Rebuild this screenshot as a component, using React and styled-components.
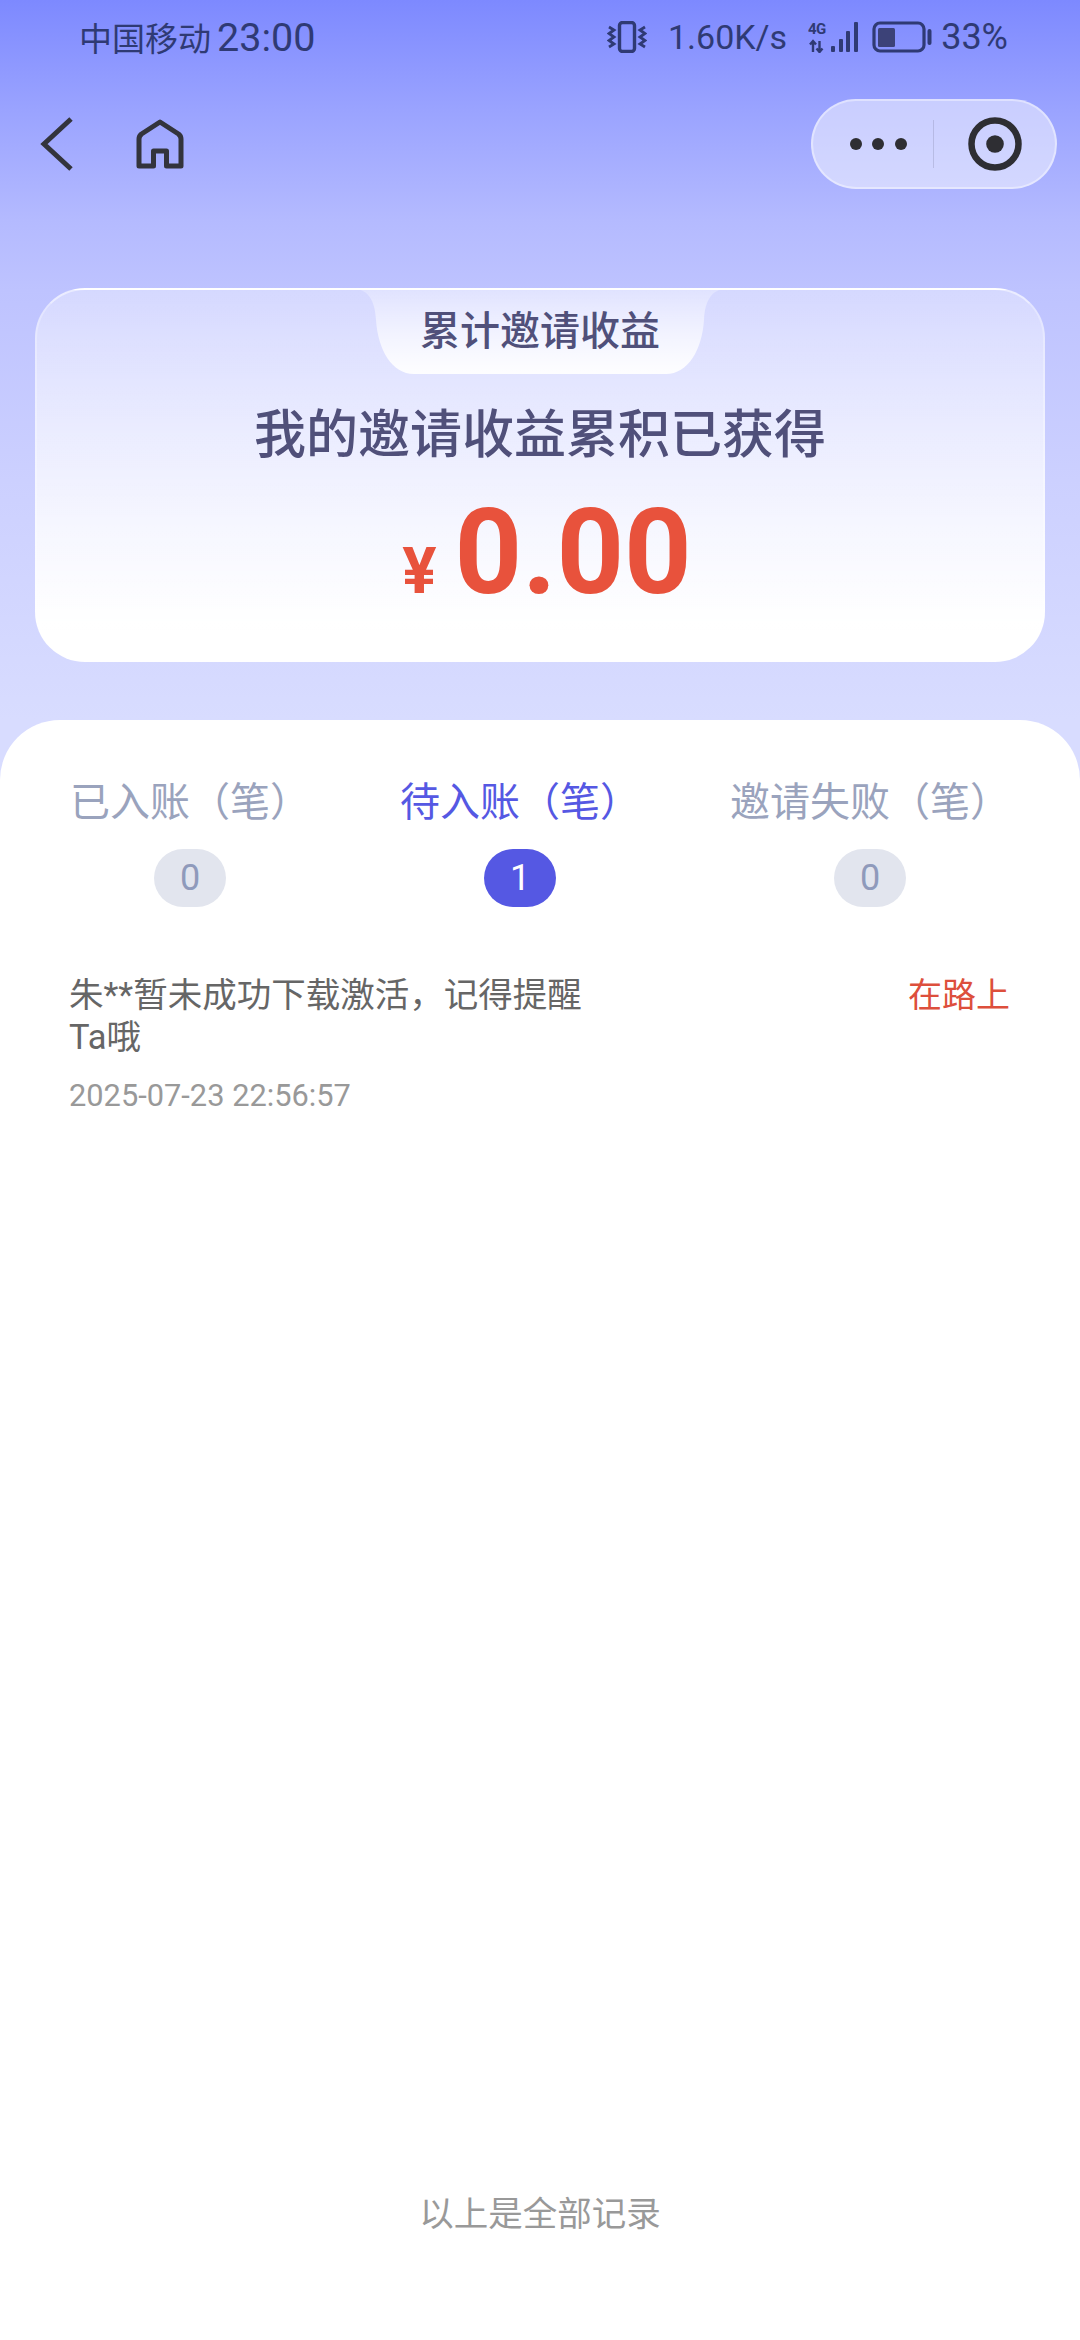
import styled, { createGlobalStyle } from "styled-components";

const GlobalStyle = createGlobalStyle`
  html, body {
    margin: 0;
    padding: 0;
  }
  body {
    font-family: Roboto, "Noto Sans CJK SC", sans-serif;
  }
`;

const Page = styled.div`
  width: 1080px;
  height: 2340px;
  display: flex;
  flex-direction: column;
  overflow: hidden;
  background: linear-gradient(
    180deg,
    #7d89ff 0,
    #9aa3ff 110px,
    #b4baff 220px,
    #bec3ff 290px,
    #ccd0ff 480px,
    #d8dcff 720px
  );
`;

const StatusBar = styled.div`
  height: 74px;
  padding: 0 72px 0 79px;
  display: flex;
  align-items: center;
  justify-content: space-between;
  color: #2f3a74;
`;

const StatusGroup = styled.div`
  display: flex;
  align-items: center;
`;

const Carrier = styled.span`
  font-size: 33px;
  margin-right: 6px;
`;

const Clock = styled.span`
  font-size: 39.5px;
`;

const Speed = styled.span`
  font-size: 34px;
  margin: 0 21px 0 21px;
`;

const Percent = styled.span`
  font-size: 36px;
  margin-left: 9px;
`;

const BatteryWrap = styled.span`
  display: flex;
  margin-left: 12px;
`;

const NavBar = styled.div`
  margin-top: 25px;
  height: 90px;
  padding: 0 23px 0 39px;
  display: flex;
  align-items: center;
  justify-content: space-between;
`;

const NavLeft = styled.div`
  display: flex;
  align-items: center;
  gap: 63px;
`;

const Capsule = styled.div`
  width: 246px;
  height: 90px;
  box-sizing: border-box;
  border: 2px solid rgba(255, 255, 255, 0.4);
  border-radius: 45px;
  background: rgba(255, 255, 255, 0.48);
  display: flex;
  align-items: center;
`;

const Dots = styled.div`
  width: 120px;
  display: flex;
  justify-content: center;
  gap: 10.5px;
  padding-left: 10px;
  box-sizing: border-box;
`;

const Dot = styled.i`
  width: 12px;
  height: 12px;
  border-radius: 50%;
  background: #2e2e33;
`;

const CapsuleLine = styled.div`
  width: 1px;
  height: 48px;
  background: rgba(60, 60, 90, 0.16);
`;

const CapsuleRight = styled.div`
  flex: 1;
  display: flex;
  justify-content: center;
`;

const Card = styled.section`
  margin: 99px 35px 0;
  height: 374px;
  box-sizing: border-box;
  border: 2px solid rgba(255, 255, 255, 0.28);
  border-top-color: rgba(255, 255, 255, 0.5);
  border-bottom-color: #fff;
  border-radius: 50px;
  background: linear-gradient(180deg, rgba(255, 255, 255, 0.36) 0%, #fff 92%);
  display: flex;
  flex-direction: column;
  align-items: center;
`;

const Tab = styled.div`
  position: relative;
  width: 380px;
  height: 84px;
  display: flex;
  align-items: center;
  justify-content: center;
`;

const TabShape = styled.svg`
  position: absolute;
  left: 0;
  top: -2px;
`;

const TabLabel = styled.span`
  position: relative;
  font-size: 40px;
  font-weight: 500;
  color: #50507a;
  line-height: 80px;
`;

const Heading = styled.h1`
  margin: 22px 0 0;
  font-size: 52px;
  line-height: 80px;
  font-weight: 500;
  color: #50507a;
`;

const Amount = styled.div`
  margin: 12px 0 0 14px;
  display: flex;
  align-items: baseline;
  color: #e8523c;
  font-weight: 700;
`;

const Yen = styled.span`
  font-size: 64px;
  margin-right: 18px;
`;

const Value = styled.span`
  font-size: 118px;
  line-height: 130px;
`;

const Sheet = styled.section`
  margin-top: 58px;
  flex: 1;
  background: #fff;
  border-radius: 60px 60px 0 0;
  display: flex;
  flex-direction: column;
`;

const Tabs = styled.div`
  padding: 53px 70px 0;
  display: flex;
  justify-content: space-between;
`;

const Stat = styled.div`
  display: flex;
  flex-direction: column;
  align-items: center;
`;

const StatLabel = styled.div`
  font-size: 40px;
  line-height: 60px;
  color: ${(p) => (p.$active ? "#5558e3" : "#9aa3bd")};
`;

const Badge = styled.div`
  margin-top: 16px;
  width: 72px;
  height: 58px;
  border-radius: 29px;
  display: flex;
  align-items: center;
  justify-content: center;
  font-size: 36px;
  background: ${(p) => (p.$active ? "#5558e3" : "#e2e5ee")};
  color: ${(p) => (p.$active ? "#fff" : "#8f9abb")};
`;

const Row = styled.div`
  margin-top: 67px;
  padding: 0 70px 0 69px;
  display: flex;
  justify-content: space-between;
  align-items: flex-start;
`;

const RowBody = styled.div`
  width: 530px;
`;

const RowText = styled.div`
  font-size: 34.5px;
  line-height: 42px;
  color: #666;
`;

const RowDate = styled.div`
  margin-top: 18px;
  font-size: 30.8px;
  line-height: 40px;
  color: #999;
`;

const RowStatus = styled.div`
  font-size: 34px;
  line-height: 42px;
  color: #dd4f3c;
`;

const Footer = styled.div`
  margin-top: auto;
  padding-bottom: 102px;
  text-align: center;
  font-size: 34.5px;
  line-height: 48px;
  color: #999;
`;

function VibrateIcon() {
  return (
    <svg width="40" height="32" viewBox="0 0 40 32" fill="none" stroke="#2f3a74">
      <rect x="12.5" y="1.5" width="15" height="29" rx="3" strokeWidth="3.400" />
      <path d="M2 6l5 3-5 3.500 5 3.500-5 3.500 5 3.500-5 3" strokeWidth="2.800" />
      <path d="M38 6l-5 3 5 3.500-5 3.500 5 3.500-5 3.500 5 3" strokeWidth="2.800" />
    </svg>
  );
}

function SignalIcon() {
  return (
    <svg width="52" height="32" viewBox="0 0 52 32">
      <text x="0" y="13" fontSize="15" fontWeight="700" letterSpacing="-0.5" fontFamily="Roboto, sans-serif" fill="#2f3a74">
        4G
      </text>
      <path
        d="M5 31V20M2 23.500L5 20l3 3.500M11.500 20v11M8.500 27.500l3 3.500 3-3.500"
        stroke="#2f3a74"
        strokeWidth="2.400"
        fill="none"
      />
      <rect x="23" y="25" width="4" height="6" rx="1" fill="#2f3a74" />
      <rect x="31" y="18" width="4" height="13" rx="1" fill="#2f3a74" />
      <rect x="38" y="10" width="4" height="21" rx="1" fill="#2f3a74" />
      <rect x="46" y="1" width="4" height="30" rx="1" fill="#2f3a74" />
    </svg>
  );
}

function BatteryIcon() {
  return (
    <svg width="60" height="32" viewBox="0 0 60 32">
      <rect x="2" y="2" width="50" height="28" rx="6" fill="none" stroke="#2f3a74" strokeWidth="3.200" />
      <rect x="6" y="7" width="17" height="19" rx="1.500" fill="#3c4278" />
      <rect x="55.500" y="8" width="4" height="16" rx="2" fill="#2f3a74" />
    </svg>
  );
}

function BackIcon() {
  return (
    <svg width="34" height="54" viewBox="0 0 34 54" fill="none" stroke="#33343c" strokeWidth="5">
      <path d="M32 2L5 27l27 25" />
    </svg>
  );
}

function HomeIcon() {
  return (
    <svg width="48" height="50" viewBox="0 0 48 50" fill="none" stroke="#33343c" strokeWidth="5" strokeLinejoin="round">
      <path d="M24 3L5.500 15Q3 17 3 20V47h14.500V32h13v15H45V20Q45 17 42.500 15z" />
    </svg>
  );
}

function TargetIcon() {
  return (
    <svg width="54" height="54" viewBox="0 0 54 54">
      <circle cx="27" cy="27" r="23.500" fill="none" stroke="#2e2e33" strokeWidth="6.500" />
      <circle cx="27" cy="27" r="8.800" fill="#2e2e33" />
    </svg>
  );
}

const stats = [
  { label: "已入账（笔）", count: 0 },
  { label: "待入账（笔）", count: 1, active: true },
  { label: "邀请失败（笔）", count: 0 },
];

export default function App() {
  return (
    <Page>
      <GlobalStyle />
      <StatusBar>
        <StatusGroup>
          <Carrier>中国移动</Carrier>
          <Clock>23:00</Clock>
        </StatusGroup>
        <StatusGroup>
          <VibrateIcon />
          <Speed>1.60K/s</Speed>
          <SignalIcon />
          <BatteryWrap>
            <BatteryIcon />
          </BatteryWrap>
          <Percent>33%</Percent>
        </StatusGroup>
      </StatusBar>

      <NavBar>
        <NavLeft>
          <BackIcon />
          <HomeIcon />
        </NavLeft>
        <Capsule>
          <Dots>
            <Dot />
            <Dot />
            <Dot />
          </Dots>
          <CapsuleLine />
          <CapsuleRight>
            <TargetIcon />
          </CapsuleRight>
        </Capsule>
      </NavBar>

      <Card>
        <Tab>
          <TabShape width="380" height="86" viewBox="0 0 380 86">
            <defs>
              <linearGradient id="tabFill" x1="0" y1="0" x2="0" y2="1">
                <stop offset="0" stopColor="#fff" stopOpacity="0.25" />
                <stop offset="1" stopColor="#fff" stopOpacity="0.95" />
              </linearGradient>
            </defs>
            <path
              d="M0 0C18 0 25 12 26 32C28 62 42 86 64 86H316C338 86 352 62 354 32C355 12 362 0 380 0Z"
              fill="url(#tabFill)"
            />
          </TabShape>
          <TabLabel>累计邀请收益</TabLabel>
        </Tab>
        <Heading>我的邀请收益累积已获得</Heading>
        <Amount>
          <Yen>¥</Yen>
          <Value>0.00</Value>
        </Amount>
      </Card>

      <Sheet>
        <Tabs>
          {stats.map((s) => (
            <Stat key={s.label}>
              <StatLabel $active={s.active}>{s.label}</StatLabel>
              <Badge $active={s.active}>{s.count}</Badge>
            </Stat>
          ))}
        </Tabs>
        <Row>
          <RowBody>
            <RowText>朱**暂未成功下载激活，记得提醒Ta哦</RowText>
            <RowDate>2025-07-23 22:56:57</RowDate>
          </RowBody>
          <RowStatus>在路上</RowStatus>
        </Row>
        <Footer>以上是全部记录</Footer>
      </Sheet>
    </Page>
  );
}
